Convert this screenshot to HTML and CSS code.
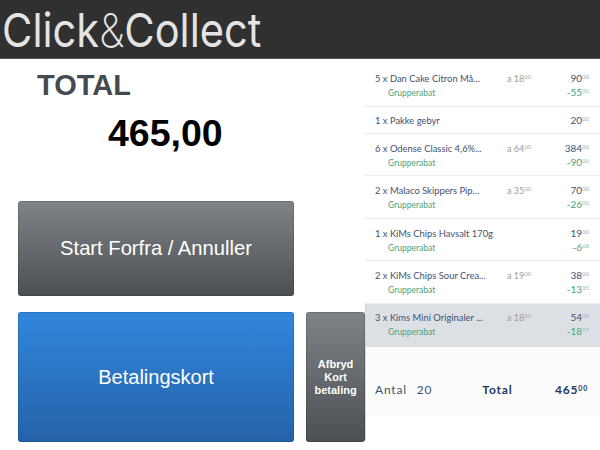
FILE: index.html
```html
<!DOCTYPE html>
<html lang="da">
<head>
<meta charset="utf-8">
<title>Click&amp;Collect</title>
<link rel="stylesheet" href="styles.css">
</head>
<body>
<header class="top"><span class="logo">Click<span class="amp">&amp;</span>Collect</span></header>
<main class="main">
  <section class="left">
    <h1 class="total-label">TOTAL</h1>
    <div class="total-value">465,00</div>
    <button class="btn btn-grey btn-start">Start Forfra / Annuller</button>
    <div class="pay-row">
      <button class="btn btn-blue">Betalingskort</button>
      <button class="btn btn-grey btn-abort">Afbryd<br>Kort<br>betaling</button>
    </div>
  </section>
  <section class="right">
    <div class="row r48">
      <div class="line"><span class="name">5 x Dan Cake Citron Må...</span><span class="each">a 18<sup>00</sup></span><span class="price">90<sup>00</sup></span></div>
      <div class="line disc"><span class="name">Grupperabat</span><span class="price">-55<sup>00</sup></span></div>
    </div>
    <div class="row r27">
      <div class="line"><span class="name">1 x Pakke gebyr</span><span class="price">20<sup>00</sup></span></div>
    </div>
    <div class="row r42">
      <div class="line"><span class="name">6 x Odense Classic 4,6%...</span><span class="each">a 64<sup>00</sup></span><span class="price">384<sup>00</sup></span></div>
      <div class="line disc"><span class="name">Grupperabat</span><span class="price">-90<sup>00</sup></span></div>
    </div>
    <div class="row">
      <div class="line"><span class="name">2 x Malaco Skippers Pip...</span><span class="each">a 35<sup>00</sup></span><span class="price">70<sup>00</sup></span></div>
      <div class="line disc"><span class="name">Grupperabat</span><span class="price">-26<sup>00</sup></span></div>
    </div>
    <div class="row r42">
      <div class="line"><span class="name">1 x KiMs Chips Havsalt 170g</span><span class="price">19<sup>00</sup></span></div>
      <div class="line disc"><span class="name">Grupperabat</span><span class="price">-6<sup>68</sup></span></div>
    </div>
    <div class="row">
      <div class="line"><span class="name">2 x KiMs Chips Sour Crea...</span><span class="each">a 19<sup>00</sup></span><span class="price">38<sup>00</sup></span></div>
      <div class="line disc"><span class="name">Grupperabat</span><span class="price">-13<sup>35</sup></span></div>
    </div>
    <div class="lower">
      <div class="row selected">
        <div class="line"><span class="name">3 x Kims Mini Originaler ...</span><span class="each">a 18<sup>00</sup></span><span class="price">54<sup>00</sup></span></div>
        <div class="line disc"><span class="name">Grupperabat</span><span class="price">-18<sup>97</sup></span></div>
      </div>
      <div class="summary">
        <span class="s-label">Antal</span><span class="s-count">20</span>
        <span class="s-total">Total</span><span class="s-sum">465<sup>00</sup></span>
      </div>
    </div>
  </section>
</main>
</body>
</html>
```

FILE: styles.css
```css
* { box-sizing: border-box; }
html, body { margin: 0; padding: 0; }
body {
  width: 600px;
  height: 450px;
  overflow: hidden;
  background: #fff;
  font-family: "Liberation Sans", Arial, sans-serif;
}
.top {
  height: 59px;
  background: #303030;
  border-bottom: 1px solid #555;
  padding-left: 2px;
  overflow: hidden;
}
.logo {
  display: block;
  color: #e4e4e4;
  font-family: "Inter", sans-serif;
  font-weight: 400;
  font-size: 47px;
  line-height: 59px;
  white-space: nowrap;
  transform: scaleX(.885);
  transform-origin: left center;
}
.amp { font-weight: 200; }
.main { display: flex; height: 391px; }
.left { width: 365px; flex: none; padding: 10px 0 0 18px; }
.total-label {
  margin: 0 0 0 19px;
  font-size: 29px;
  line-height: 32px;
  font-weight: 700;
  color: #454a50;
}
.total-value {
  margin: 11px 0 0 90px;
  font-size: 37.5px;
  line-height: 42px;
  font-weight: 700;
  color: #000;
}
.btn {
  display: block;
  border: 0;
  border-radius: 3px;
  padding: 0;
  color: #fff;
  font-family: inherit;
  text-align: center;
  box-shadow: inset 0 0 0 1px rgba(0,0,0,.12);
}
.btn-grey { background: linear-gradient(#7f8387, #4c4f53); }
.btn-blue { background: linear-gradient(#3186de, #2462a8); width: 277px; height: 130px; font-size: 20px; }
.btn-start { width: 276px; height: 95px; margin-top: 47px; font-size: 20.2px; }
.pay-row { display: flex; gap: 12px; margin-top: 16px; }
.btn-abort { width: 59px; height: 130px; font-size: 11px; font-weight: 700; line-height: 13px; }
.right {
  width: 235px;
  flex: none;
  font-family: "Lato", sans-serif;
  font-size: 9.4px;
  color: #3f5270;
}
.row {
  height: 43px;
  padding: 7px 11px 0 10px;
  border-bottom: 1px solid #ececec;
}
.r48 { height: 48px; padding-top: 12px; }
.r27 { height: 27px; padding-top: 6px; }
.r42 { height: 42px; }
.lower { border-left: 1px solid #d8d8d8; height: 136px; }
.row.selected { background: #dce0e4; border-bottom: 0; padding: 6px 11px 0 9px; }
.line { display: flex; height: 14px; line-height: 14px; align-items: baseline; }
.name { width: 132px; white-space: nowrap; flex: none; }
.each { width: 40px; color: #9a9ea4; flex: none; font-size: 9px; }
.price { margin-left: auto; text-align: right; white-space: nowrap; font-size: 10px; }
sup { font-size: 6px; line-height: 0; vertical-align: 3px; color: #a5a9ae; }
.disc { color: #4aa27c; font-size: 8.5px; }
.disc .name { padding-left: 13px; }
.disc .price { font-size: 10px; color: #4aa27c; }
.disc sup { color: #8cc4aa; }
.summary {
  height: 69px;
  background: #fcfcfc;
  display: flex;
  align-items: center;
  padding: 15px 12px 0 9px;
  font-size: 12px;
  letter-spacing: .8px;
}
.s-count { margin-left: 10px; }
.s-total { margin-left: 50px; font-weight: 700; color: #1f3a5c; }
.s-sum { margin-left: auto; font-weight: 700; color: #1f3a5c; }
.s-sum sup { color: #1f3a5c; font-size: 7px; }
```
